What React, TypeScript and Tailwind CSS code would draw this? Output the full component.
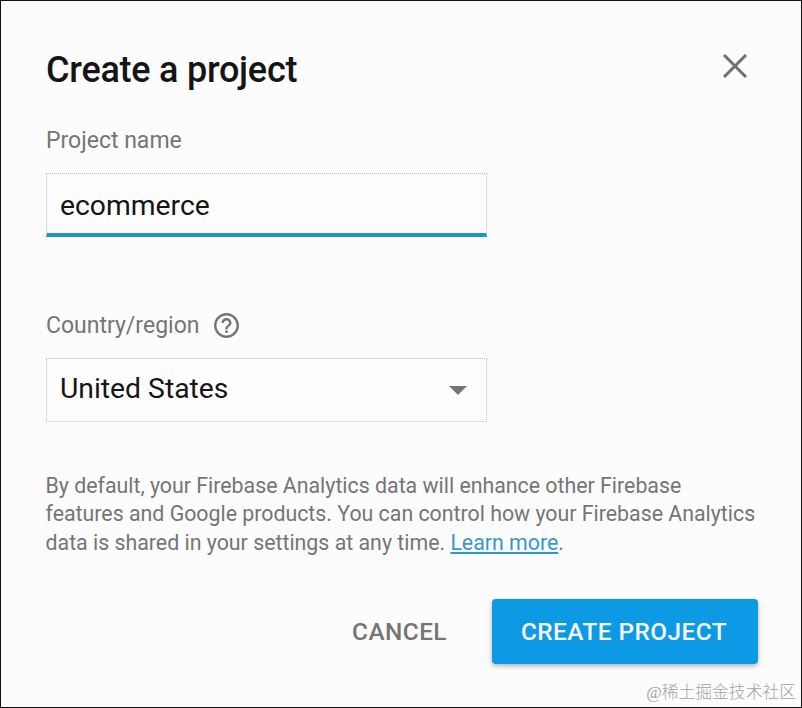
import { useState } from 'react';

export default function App() {
  const [name, setName] = useState('ecommerce');

  return (
    <div className="flex h-[708px] w-[802px] flex-col border border-[#111] bg-[#fcfcfc] pl-[45px] pr-[43px] font-['Roboto',sans-serif] text-[#757575]">
      {/* Header */}
      <div className="flex h-[96px] items-start justify-between pt-[48px]">
        <h1 className="text-[36px] leading-[42px] font-medium tracking-[-0.25px] text-[#151515]">Create a project</h1>
        <button className="mt-[5px] mr-[11px]" aria-label="Close">
          <svg width="24" height="24" viewBox="0 0 24 24" fill="none" stroke="#6f6f6f" strokeWidth="3">
            <path d="M1 1 23 23M23 1 1 23" />
          </svg>
        </button>
      </div>

      {/* Project name */}
      <label className="mt-[30px] text-[23px] leading-[28px]">Project name</label>
      <input
        className="mt-[18px] h-[64px] w-[441px] border border-b-4 border-dotted border-[#b0c4c8] border-b-[#1b96d1] bg-[#fdfdfd] px-[13px] pt-[3px] text-[28.3px] text-[#151515] outline-none [border-bottom-style:solid]"
        value={name}
        onChange={(e) => setName(e.target.value)}
      />

      {/* Country */}
      <div className="mt-[74px] flex h-[28px] items-center gap-[15px] text-[23px] leading-[28px]">
        <span className="pt-[2px]">Country/region</span>
        <svg width="25" height="25" viewBox="2 2 20 20" fill="#757575">
          <path d="M11 18h2v-2h-2v2zm1-16C6.48 2 2 6.48 2 12s4.48 10 10 10 10-4.48 10-10S17.52 2 12 2zm0 18c-4.41 0-8-3.59-8-8s3.59-8 8-8 8 3.59 8 8-3.59 8-8 8zm0-14c-2.21 0-4 1.79-4 4h2c0-1.1.9-2 2-2s2 .9 2 2c0 2-3 1.75-3 5h2c0-2.25 3-2.5 3-5 0-2.21-1.79-4-4-4z" />
        </svg>
      </div>
      <button className="mt-[19px] flex h-[64px] w-[441px] items-center justify-between border border-dotted border-[#b0c4c8] border-b-[#d3e6e2] bg-[#fdfdfd] pr-[19px] pl-[13px] text-[28.3px] text-[#151515] [border-bottom-style:solid]">
        <span className="pb-px">United States</span>
        <svg width="18" height="9" viewBox="0 0 18 9" fill="#757575">
          <path d="M0 0h18L9 9z" />
        </svg>
      </button>

      <p className="mt-[50px] -ml-[0.5px] text-[21.33px] leading-[28.4px] whitespace-nowrap">
        By default, your Firebase Analytics data will enhance other Firebase
        <br />
        features and Google products. You can control how your Firebase Analytics
        <br />
        data is shared in your settings at any time. <a className="text-[#3399cc] underline">Learn more</a>.
      </p>

      {/* Actions */}
      <div className="mt-[42px] flex h-[65px] items-center justify-end gap-[45px] text-[24.4px] font-medium tracking-[0.45px]">
        <button className="pt-px">CANCEL</button>
        <button className="h-[65px] w-[266px] rounded-[4px] bg-[#0d99e3] pt-px pr-[2px] text-[#f4fafd] shadow-[0_2px_5px_rgba(0,0,0,0.3)]">CREATE PROJECT</button>
      </div>
      <div className="mt-[17px] -mr-[38px] text-right font-['Liberation_Serif','Noto_Sans_CJK_SC',sans-serif] text-[16.8px] leading-[24px] font-light text-[#a3a3a3]">@稀土掘金技术社区</div>
    </div>
  );
}
